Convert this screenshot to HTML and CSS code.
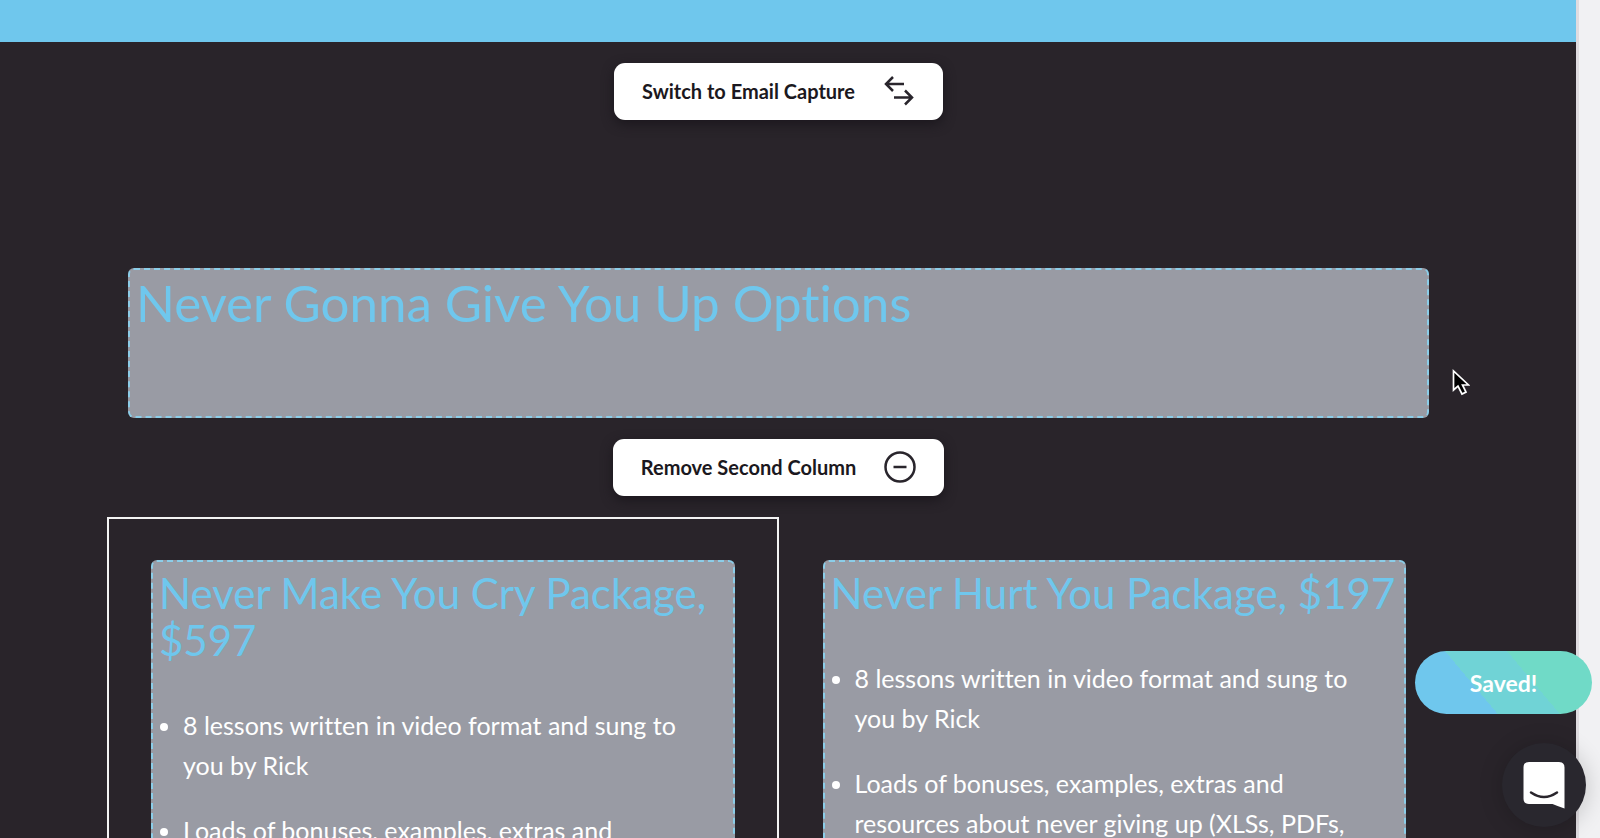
FILE: index.html
```html
<!DOCTYPE html>
<html lang="en">
<head>
<meta charset="utf-8">
<title>Page editor</title>
<link rel="stylesheet" href="styles.css">
</head>
<body>
<div class="editor">
  <div class="page">
    <div class="band"></div>
    <main class="section">
      <button class="tool" type="button">
        <span>Switch to Email Capture</span>
        <svg class="icon" viewBox="0 0 32 32" aria-hidden="true"><path d="M21 9H3M10 2 3 9l7 7M11 22.500h18M22 15.500l7 7-7 7"/></svg>
      </button>
      <div class="block intro"><h1>Never Gonna Give You Up Options</h1></div>
      <button class="tool" type="button">
        <span>Remove Second Column</span>
        <svg class="icon" viewBox="0 0 32 32" aria-hidden="true"><circle cx="16" cy="16" r="14.500"/><path d="M9.500 16h13"/></svg>
      </button>
      <div class="columns">
        <section class="column active">
          <div class="block">
            <h2>Never Make You Cry Package, $597</h2>
            <ul>
              <li>8 lessons written in video format and sung to you by Rick</li>
              <li>Loads of bonuses, examples, extras and</li>
            </ul>
          </div>
        </section>
        <section class="column">
          <div class="block">
            <h2>Never Hurt You Package, $197</h2>
            <ul>
              <li>8 lessons written in video format and sung to you by Rick</li>
              <li>Loads of bonuses, examples, extras and resources about never giving up (XLSs, PDFs,</li>
            </ul>
          </div>
        </section>
      </div>
    </main>
  </div>
  <div class="gutter"></div>
  <div class="saved" role="status">Saved!</div>
  <button class="chat" type="button" aria-label="Open chat">
    <svg viewBox="0 0 42 47" aria-hidden="true"><path fill="#fff" d="M6 0h30q5.500 0 5.500 5.500V46.500q-6-2-12-4.500H6Q.5 42 .5 36.500V5.500Q.5 0 6 0z"/><path d="M8 30.500q13 9 26 0" fill="none" stroke="#29252c" stroke-width="2.500" stroke-linecap="round"/></svg>
  </button>
  <svg class="cursor" viewBox="0 0 18 27" aria-hidden="true"><path d="M1.500 2v19l4.500-4 4 8 4-2-3.500-7h6z" fill="#000" stroke="#fff" stroke-width="1.700"/></svg>
</div>
</body>
</html>
```
FILE: styles.css
```css
* { box-sizing: border-box; }
body { margin: 0; font-family: Lato, "Liberation Sans", sans-serif; font-variant-ligatures: none; }
h1, h2, ul { margin: 0; font-weight: 400; }

.editor { position: relative; display: flex; height: 100vh; overflow: hidden; }
.page { flex: 1; display: flex; flex-direction: column; min-width: 0; background: #29242a; }
.band { flex: none; height: 42px; background: #6fc7ed; }
.gutter { width: 24px; background: #f1f1f3; border-left: 3px solid #dfdce0; }

.section {
  flex: 1;
  display: flex;
  flex-direction: column;
  align-items: center;
  padding: 21px 126px 0 107px;
}
.tool {
  flex: none;
  display: flex;
  align-items: center;
  gap: 28px;
  height: 57px;
  padding: 0 28px 1px;
  border: 0;
  border-radius: 11px;
  background: #fff;
  color: #1b1820;
  font: 700 20px Lato, "Liberation Sans", sans-serif;
  box-shadow: 0 4px 12px #1b171d;
}
.icon { width: 32px; height: 32px; fill: none; stroke: #29252c; stroke-width: 2.500; }

.block {
  border: 2px dashed #8bcde8;
  border-radius: 6px;
  background: #999ba4;
  padding: 8px 6px;
}
.intro { flex: none; align-self: stretch; height: 150px; margin: 148px 21px 21px; }
h1 { color: #6fc7ed; font-size: 51px; line-height: 50px; }
h2 { color: #6fc7ed; font-size: 42px; line-height: 47px; }

.columns { flex: 1; align-self: stretch; display: grid; grid-template-columns: 1fr 1fr; margin-top: 21px; }
.column { padding: 41px 42px 0; border: 2px solid transparent; border-bottom: 0; }
.active { border-color: #f3f3f3; }
.column .block { height: 100%; border-bottom: 0; border-radius: 6px 6px 0 0; }
ul { margin-top: 41px; padding: 0 20px 0 24px; color: #fff; font-size: 25px; line-height: 40px; }
li + li { margin-top: 25px; }

.saved {
  position: absolute;
  right: 8px;
  bottom: 124px;
  display: grid;
  place-items: center;
  width: 177px;
  height: 63px;
  border-radius: 32px;
  background: linear-gradient(50deg, #6fc7ed 36%, #70d3d6 36%, #70d3d6 63%, #70dac7 63%);
  color: #fff;
  font-size: 23px;
  font-weight: 700;
}
.chat {
  position: absolute;
  right: 14px;
  bottom: 11px;
  display: grid;
  place-items: center;
  width: 84px;
  height: 84px;
  border: 0;
  border-radius: 50%;
  background: #29272e;
  box-shadow: 0 2px 24px rgba(0, 0, 0, 0.2);
}
.chat svg { width: 42px; height: 47px; }
.cursor { position: absolute; left: 1452px; top: 369px; width: 18px; height: 27px; }
```
